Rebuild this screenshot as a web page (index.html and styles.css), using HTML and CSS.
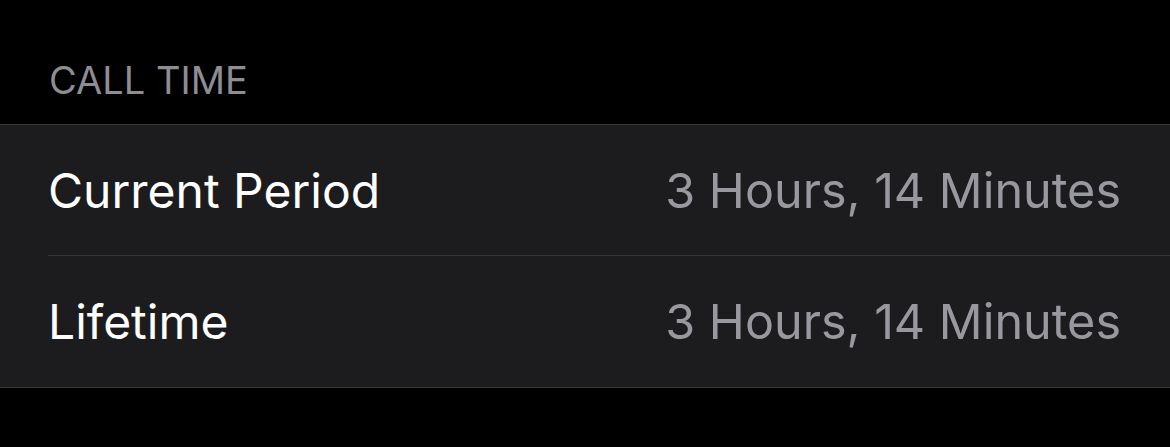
FILE: index.html
```html
<!DOCTYPE html>
<html lang="en">
  <head>
    <meta charset="UTF-8" />
    <title>Call Time</title>
    <link rel="stylesheet" href="styles.css">
  </head>
  <body>
    <div class="section">
      <div class="section-header">CALL TIME</div>
      <div class="group">
        <div class="row">
          <span class="label">Current Period</span>
          <span class="value">3 Hours, 14 Minutes</span>
        </div>
        <div class="row">
          <span class="label">Lifetime</span>
          <span class="value">3 Hours, 14 Minutes</span>
        </div>
      </div>
    </div>
  </body>
</html>
```

FILE: styles.css
```css
body {
  margin: 0;
  background: #000;
  font-family: Inter, "Liberation Sans", sans-serif;
  height: 100vh;
}

.section {
  padding-top: 58px;
}

.section-header {
  color: #8d8d93;
  font-size: 38px;
  line-height: 44px;
  padding: 0 0 22px 49px;
}

.group {
  background: #1c1c1e;
  border-top: 1px solid #38383a;
  border-bottom: 1px solid #38383a;
}

.row {
  display: flex;
  justify-content: space-between;
  align-items: center;
  height: 130px;
  margin-left: 48px;
  padding-right: 49px;
  font-size: 48px;
}

.row + .row {
  height: 131px;
  border-top: 1px solid #38383a;
}

.label {
  color: #fff;
}

.value {
  color: #98989f;
  font-size: 48.5px;
}
```
